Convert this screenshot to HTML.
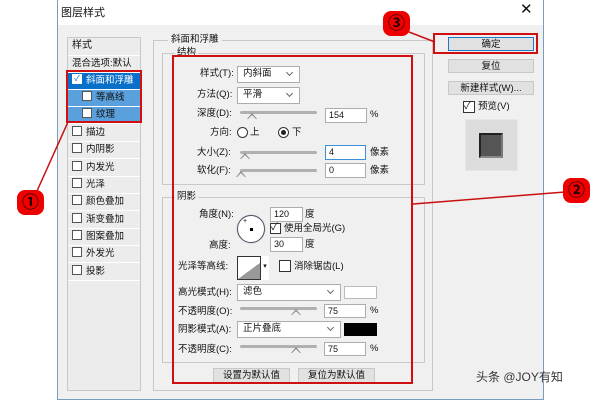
<!DOCTYPE html>
<html><head><meta charset="utf-8"><style>
*{margin:0;padding:0;box-sizing:border-box}
body{width:600px;height:400px;background:#fff;position:relative;overflow:hidden;font-family:"Liberation Sans","Noto Sans CJK SC",sans-serif;font-size:9.5px;color:#111}
.a{position:absolute}
.t{position:absolute;white-space:nowrap;line-height:12px}
.box{position:absolute;border:1px solid #c8c8c8}
.inp{position:absolute;background:#fff;border:1px solid #adadad;font-size:9px;padding-left:3px;line-height:13px}
.dd{position:absolute;background:#fff;border:1px solid #adadad;padding-left:5px;line-height:14px}
.dd:after{content:"";position:absolute;right:7px;top:3px;width:4px;height:4px;border-right:1px solid #666;border-bottom:1px solid #666;transform:rotate(45deg)}
.sl{position:absolute;height:3px;background:#b0b0b0;border-radius:2px}
.th{position:absolute;width:9px;height:6px;}
.th:before{content:"";position:absolute;left:0;top:0;border-left:5px solid transparent;border-right:5px solid transparent;border-bottom:6px solid #888}
.th:after{content:"";position:absolute;left:1px;top:1.5px;border-left:4px solid transparent;border-right:4px solid transparent;border-bottom:4px solid #eee}
.cb{position:absolute;width:10px;height:10px;border:1px solid #333;background:#fff}
.btn{position:absolute;background:#e1e1e1;border:1px solid #c8c8c8;text-align:center;line-height:13px}
.row{position:absolute;left:68px;width:72px;height:17px;border-bottom:1px solid #fff;padding-left:4px;line-height:16px}
.row .cb{position:relative;display:inline-block;vertical-align:middle;margin-right:4px;top:-1px;border-color:#555;font-size:8px;line-height:8px;text-align:center;color:#0a6fc9}
.red{position:absolute;border:2px solid #d01010}
.circ{position:absolute;width:27px;height:25px;background:#e00;border-radius:8px;text-align:center;line-height:25px;font-size:17px;font-weight:bold;color:#200}
</style></head><body>
<div class="a" style="left:57px;top:0;width:487px;height:400px;border:1px solid #7a9cbf;border-top:none;background:#f0f0f0"></div>
<div class="a" style="left:58px;top:0;width:485px;height:25px;background:#fff"></div>
<div class="t" style="left:61px;top:7px;font-size:11px">图层样式</div>
<div class="t" style="left:520px;top:4px;font-size:15px;font-weight:300">✕</div>

<div class="a" style="left:67px;top:37px;width:74px;height:354px;border:1px solid #c8c8c8;background:#ececec"></div>
<div class="row" style="top:38px;height:18px;font-size:10px">样式</div>
<div class="row" style="top:56px">混合选项:默认</div>
<div class="row" style="top:73px;background:#0a6fc9;color:#fff"><span class="cb" style="border-color:#fff">✓</span>斜面和浮雕</div>
<div class="row" style="top:90px;background:#5aa0dc;padding-left:14px"><span class="cb"></span>等高线</div>
<div class="row" style="top:107px;background:#5aa0dc;padding-left:14px"><span class="cb"></span>纹理</div>
<div class="row" style="top:125px"><span class="cb"></span>描边</div>
<div class="row" style="top:142px"><span class="cb"></span>内阴影</div>
<div class="row" style="top:160px"><span class="cb"></span>内发光</div>
<div class="row" style="top:177px"><span class="cb"></span>光泽</div>
<div class="row" style="top:194px"><span class="cb"></span>颜色叠加</div>
<div class="row" style="top:212px"><span class="cb"></span>渐变叠加</div>
<div class="row" style="top:229px"><span class="cb"></span>图案叠加</div>
<div class="row" style="top:246px"><span class="cb"></span>外发光</div>
<div class="row" style="top:264px"><span class="cb"></span>投影</div>

<div class="box" style="left:153px;top:40px;width:280px;height:351px"></div>
<div class="t" style="left:168px;top:34px;background:#f0f0f0;padding:0 3px">斜面和浮雕</div>
<div class="box" style="left:162px;top:53px;width:263px;height:132px"></div>
<div class="t" style="left:175px;top:47px;background:#f0f0f0;padding:0 2px">结构</div>
<div class="box" style="left:162px;top:197px;width:263px;height:166px"></div>
<div class="t" style="left:175px;top:191px;background:#f0f0f0;padding:0 2px">阴影</div>

<div class="t" style="left:200px;top:68px">样式(T):</div>
<div class="dd" style="left:237px;top:66px;width:63px;height:17px">内斜面</div>
<div class="t" style="left:197px;top:89px">方法(Q):</div>
<div class="dd" style="left:237px;top:87px;width:63px;height:17px">平滑</div>
<div class="t" style="left:197px;top:108px">深度(D):</div>
<div class="sl" style="left:240px;top:111px;width:77px"></div><div class="th" style="left:247px;top:113px"></div>
<div class="inp" style="left:325px;top:108px;width:42px;height:15px">154</div><div class="t" style="left:370px;top:109px">%</div>
<div class="t" style="left:210px;top:127px">方向:</div>
<div class="a" style="left:237px;top:127px;width:11px;height:11px;border:1px solid #333;border-radius:50%;background:#fff"></div><div class="t" style="left:250px;top:127px">上</div>
<div class="a" style="left:278px;top:127px;width:11px;height:11px;border:1px solid #333;border-radius:50%;background:#fff"><div class="a" style="left:2px;top:2px;width:5px;height:5px;border-radius:50%;background:#222"></div></div><div class="t" style="left:292px;top:127px">下</div>
<div class="t" style="left:197px;top:147px">大小(Z):</div>
<div class="sl" style="left:240px;top:151px;width:77px"></div><div class="th" style="left:240px;top:153px"></div>
<div class="inp" style="left:325px;top:145px;width:41px;height:15px;border-color:#3c8fd8">4</div><div class="t" style="left:370px;top:147px">像素</div>
<div class="t" style="left:197px;top:165px">软化(F):</div>
<div class="sl" style="left:240px;top:169px;width:77px"></div><div class="th" style="left:236px;top:171px"></div>
<div class="inp" style="left:325px;top:163px;width:41px;height:15px">0</div><div class="t" style="left:370px;top:165px">像素</div>

<div class="t" style="left:199px;top:209px">角度(N):</div>
<div class="a" style="left:237px;top:215px;width:28px;height:28px;border:1px solid #556;border-radius:50%;background:#fff;box-shadow:0 0 1px #88a"><div class="a" style="left:12px;top:12px;width:3px;height:3px;background:#000"></div><div class="t" style="left:5px;top:0;font-size:7px">+</div></div>
<div class="inp" style="left:270px;top:207px;width:33px;height:15px">120</div><div class="t" style="left:305px;top:209px">度</div>
<div class="cb" style="left:270px;top:223px;width:11px;height:11px"></div><div class="t" style="left:271px;top:222px;font-size:10px">✓</div><div class="t" style="left:284px;top:223px">使用全局光(G)</div>
<div class="t" style="left:209px;top:240px">高度:</div>
<div class="inp" style="left:270px;top:237px;width:33px;height:15px">30</div><div class="t" style="left:305px;top:239px">度</div>
<div class="t" style="left:178px;top:261px">光泽等高线:</div>
<div class="a" style="left:237px;top:256px;width:32px;height:24px;border:1px solid #333;background:linear-gradient(to bottom right,#fff 50%,#999 50%)"></div>
<div class="a" style="left:260px;top:256px;width:9px;height:24px;border-left:1px solid #333;background:#fff;font-size:7px;text-align:center;line-height:22px">▾</div>
<div class="cb" style="left:279px;top:260px;width:12px;height:12px"></div><div class="t" style="left:294px;top:261px">消除锯齿(L)</div>
<div class="t" style="left:178px;top:287px">高光模式(H):</div>
<div class="dd" style="left:237px;top:284px;width:104px;height:17px">滤色</div>
<div class="a" style="left:344px;top:286px;width:33px;height:13px;border:1px solid #bbb;background:#fff"></div>
<div class="t" style="left:178px;top:306px">不透明度(O):</div>
<div class="sl" style="left:240px;top:307px;width:77px"></div><div class="th" style="left:291px;top:309px"></div>
<div class="inp" style="left:324px;top:304px;width:42px;height:14px">75</div><div class="t" style="left:370px;top:305px">%</div>
<div class="t" style="left:178px;top:324px">阴影模式(A):</div>
<div class="dd" style="left:237px;top:321px;width:104px;height:17px">正片叠底</div>
<div class="a" style="left:344px;top:323px;width:33px;height:13px;background:#000"></div>
<div class="t" style="left:178px;top:344px">不透明度(C):</div>
<div class="sl" style="left:240px;top:345px;width:77px"></div><div class="th" style="left:291px;top:347px"></div>
<div class="inp" style="left:324px;top:342px;width:42px;height:14px">75</div><div class="t" style="left:370px;top:343px">%</div>
<div class="btn" style="left:213px;top:368px;width:77px;height:16px">设置为默认值</div>
<div class="btn" style="left:298px;top:368px;width:77px;height:16px">复位为默认值</div>

<div class="btn" style="left:448px;top:37px;width:86px;height:14px;border:1px solid #1e78c8">确定</div>
<div class="btn" style="left:448px;top:59px;width:86px;height:14px">复位</div>
<div class="btn" style="left:448px;top:81px;width:86px;height:14px">新建样式(W)...</div>
<div class="cb" style="left:463px;top:101px;width:12px;height:12px"></div><div class="t" style="left:464px;top:101px;font-size:10px">✓</div><div class="t" style="left:478px;top:101px">预览(V)</div>
<div class="a" style="left:465px;top:119px;width:53px;height:52px;background:#dcdcdc;border:1px solid #e6e6e6"></div>
<div class="a" style="left:479px;top:133px;width:24px;height:25px;background:#555;border-top:2px solid #222;border-left:2px solid #222;border-right:2px solid #777;border-bottom:2px solid #888"></div>

<div class="red" style="left:66px;top:70px;width:76px;height:53px"></div>
<div class="red" style="left:172px;top:55px;width:241px;height:329px"></div>
<div class="red" style="left:433px;top:33px;width:105px;height:21px"></div>
<svg class="a" style="left:0;top:0" width="600" height="400"><g stroke="#c81010" stroke-width="1.5"><line x1="68" y1="122" x2="37" y2="191"/><line x1="409" y1="32" x2="435" y2="42"/><line x1="413" y1="204" x2="565" y2="192"/></g></svg>
<div class="circ" style="left:383px;top:11px">③</div>
<div class="circ" style="left:17px;top:190px">①</div>
<div class="circ" style="left:563px;top:178px">②</div>
<div class="t" style="left:476px;top:371px;font-size:12px;color:#333;text-shadow:0 0 2px #fff">头条 @JOY有知</div>
</body></html>
